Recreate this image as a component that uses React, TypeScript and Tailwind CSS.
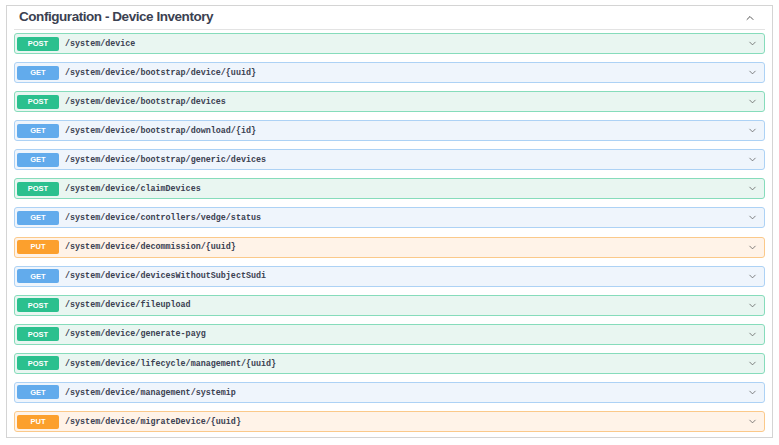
import { ChevronDown, ChevronUp } from "lucide-react";

type Method = "GET" | "POST" | "PUT";

const ops: { method: Method; path: string }[] = [
  { method: "POST", path: "/system/device" },
  { method: "GET", path: "/system/device/bootstrap/device/{uuid}" },
  { method: "POST", path: "/system/device/bootstrap/devices" },
  { method: "GET", path: "/system/device/bootstrap/download/{id}" },
  { method: "GET", path: "/system/device/bootstrap/generic/devices" },
  { method: "POST", path: "/system/device/claimDevices" },
  { method: "GET", path: "/system/device/controllers/vedge/status" },
  { method: "PUT", path: "/system/device/decommission/{uuid}" },
  { method: "GET", path: "/system/device/devicesWithoutSubjectSudi" },
  { method: "POST", path: "/system/device/fileupload" },
  { method: "POST", path: "/system/device/generate-payg" },
  { method: "POST", path: "/system/device/lifecycle/management/{uuid}" },
  { method: "GET", path: "/system/device/management/systemip" },
  { method: "PUT", path: "/system/device/migrateDevice/{uuid}" },
];

const styles: Record<Method, { row: string; badge: string }> = {
  POST: { row: "border-[#86dcbb] bg-[#e9f6f1]", badge: "bg-[#2bc08e]" },
  GET: { row: "border-[#add2f5] bg-[#eff5fc]", badge: "bg-[#62abec]" },
  PUT: { row: "border-[#fbc98a] bg-[#fff3e8]", badge: "bg-[#fca02d]" },
};

function OpRow({ method, path }: { method: Method; path: string }) {
  const s = styles[method];
  return (
    <div className={`flex h-[21px] items-center rounded-[3px] border pl-[2px] pr-[6px] ${s.row}`}>
      <span
        className={`flex h-[14px] w-[42px] items-center justify-center rounded-[2px] text-[7.5px] font-bold text-white ${s.badge}`}
        style={{ fontFamily: "'Liberation Sans', Arial, sans-serif" }}
      >
        {method}
      </span>
      <span
        className="ml-[6px] flex-1 pt-[1px] text-[8.4px] font-bold text-[#3b4151]"
        style={{ fontFamily: "'Liberation Mono', 'Courier New', monospace" }}
      >
        {path}
      </span>
      <ChevronDown className="h-[11px] w-[11px] text-[#555]" strokeWidth={1.6} />
    </div>
  );
}

export default function App() {
  return (
    <div className="h-[445px] w-[779px] bg-white pl-[6px] pr-[6px] pt-[5px]">
      <div className="h-[433px] border border-[#d4d4d4] bg-white px-[7px]">
        <div className="flex h-[24px] items-center justify-between border-b border-[#e3e3e3] pl-[5px] pr-[9px]">
          <h2
            className="text-[13.5px] font-bold tracking-[-0.45px] text-[#3b4151]"
            style={{ fontFamily: "'Liberation Sans', Arial, sans-serif" }}
          >
            Configuration - Device Inventory
          </h2>
          <ChevronUp className="h-[12px] w-[12px] text-[#444]" strokeWidth={1.8} />
        </div>
        <div className="mt-[3px] flex flex-col gap-[8.08px]">
          {ops.map((op) => (
            <OpRow key={op.path} method={op.method} path={op.path} />
          ))}
        </div>
      </div>
    </div>
  );
}
